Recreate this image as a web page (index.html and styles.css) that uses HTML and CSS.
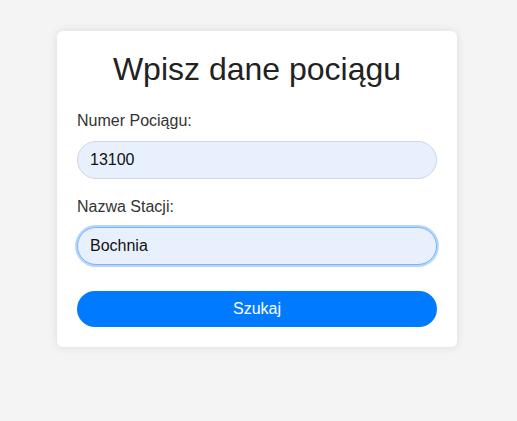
FILE: index.html
```html
<!DOCTYPE html>
<html lang="pl">
<head>
<meta charset="utf-8">
<title>Wpisz dane pociągu</title>
<link rel="stylesheet" href="styles.css">
</head>
<body>
<div class="card">
  <h1 class="title">Wpisz dane pociągu</h1>
  <form class="form" onsubmit="return false">
    <div class="group">
      <label class="label" for="train">Numer Pociągu:</label>
      <input class="field" id="train" type="text" value="13100">
    </div>
    <div class="group">
      <label class="label" for="station">Nazwa Stacji:</label>
      <input class="field" id="station" type="text" value="Bochnia" autofocus>
    </div>
    <button class="btn" type="submit">Szukaj</button>
  </form>
</div>
<script src="script.js"></script>
</body>
</html>
```
FILE: styles.css
```css
* { box-sizing: border-box; }
html, body { height: 100%; }
body {
  margin: 0;
  padding: 31px 3px 0 0;
  background: #f4f4f4;
  font-family: "Liberation Sans", Arial, sans-serif;
  color: #333;
  display: flex;
  justify-content: center;
  align-items: flex-start;
}
.card {
  width: 400px;
  background: #fff;
  border-radius: 6px;
  padding: 20px;
  box-shadow: 0 0 10px rgba(0, 0, 0, 0.1);
}
.title {
  margin: 0 0 24px;
  font-size: 32px;
  font-weight: normal;
  text-align: center;
  color: #222;
}
.form { display: flex; flex-direction: column; }
.group { margin-bottom: 19px; display: flex; flex-direction: column; }
.label {
  display: block;
  margin-bottom: 11px;
  font-size: 16px;
  color: #333;
}
.field {
  width: 100%;
  height: 38px;
  padding: 10px 12px;
  border: 1px solid #cfd6e0;
  border-radius: 19px;
  background: #e8f0fe;
  font-family: inherit;
  font-size: 16px;
  color: #111;
  outline: none;
}
.field:focus {
  border-color: #7fb5f5;
  box-shadow: 0 0 0 2px rgba(0, 123, 255, 0.3);
  caret-color: #000;
}
.btn {
  margin-top: 7px;
  height: 36px;
  border: none;
  border-radius: 18px;
  background: #007bff;
  color: #fff;
  font-family: inherit;
  font-size: 16px;
  cursor: pointer;
}
```
FILE: script.js
```js
var s = document.getElementById('station');
s.focus();
s.setSelectionRange(s.value.length, s.value.length);
```
